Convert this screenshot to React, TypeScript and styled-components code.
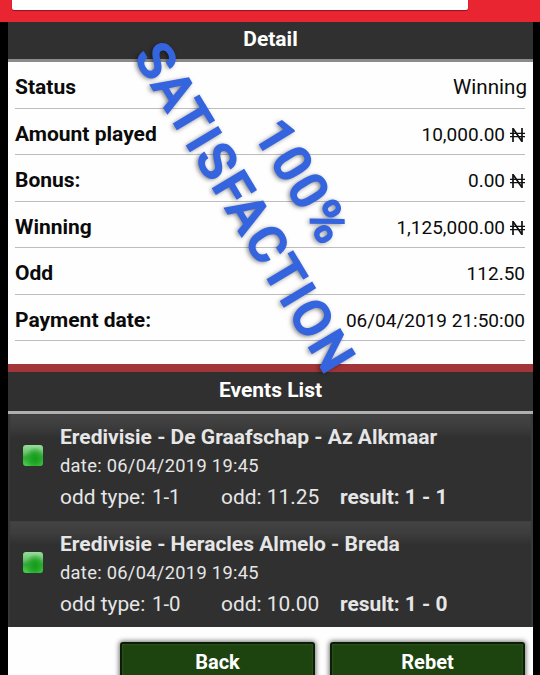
import React from 'react';
import styled, { createGlobalStyle } from 'styled-components';

const GlobalStyle = createGlobalStyle`
  * { box-sizing: border-box; }
  html, body { margin: 0; height: 675px; overflow: hidden; background: #000; }
  body { font-family: Roboto, "Noto Sans", sans-serif; color: #0b0b0b; }
`;

const Screen = styled.main`
  position: relative;
  width: 540px;
  height: 675px;
  overflow: hidden;
  background: #000;
`;

const TopBar = styled.header`
  height: 22px;
  padding-left: 12px;
  background: #e92532;
`;

const AddressField = styled.div`
  width: 456px;
  height: 10px;
  background: #fff;
  border-radius: 0 0 2px 2px;
  box-shadow: 0 1px 1px #8e1420;
`;

const Page = styled.div`
  width: 525px;
  height: 653px;
  margin-left: 8px;
  background: #fefefe;
`;

const SectionTitle = styled.h2<{ $height: number; $line: string }>`
  margin: 0;
  height: ${(p) => p.$height}px;
  padding-bottom: 3px;
  display: flex;
  align-items: center;
  justify-content: center;
  background: #303030;
  border-bottom: 3px solid ${(p) => p.$line};
  color: #fff;
  font-size: 21px;
  font-weight: 700;
  line-height: 24px;
`;

const DetailList = styled.dl`
  margin: 0;
  height: 302px;
  padding: 0 8px 0 7px;
`;

const DetailRow = styled.div`
  height: 46.5px;
  display: flex;
  justify-content: space-between;
  align-items: center;
  border-bottom: 1px solid #bdbdbd;
  line-height: 24px;
  padding-top: 5px;
`;

const Label = styled.dt`
  font-weight: 700;
  font-size: 21px;
`;

const Value = styled.dd<{ $size?: number; $shift?: number; $drop?: number }>`
  margin: 0 ${(p) => p.$shift ?? 0}px 0 0;
  padding-top: ${(p) => p.$drop ?? 2}px;
  font-size: ${(p) => p.$size ?? 19}px;
  white-space: nowrap;
`;

const Naira = styled.svg`
  width: 15px;
  height: 14px;
  margin-left: 5px;
  vertical-align: -1px;
`;

const RedRule = styled.div`
  height: 8px;
  background: #a23537;
`;

const EventRow = styled.article`
  height: 106.5px;
  display: flex;
  padding: 11px 0 0 15px;
  color: #e6e6e6;
  background: linear-gradient(#444 0, #3d3d3d 12px, #303030 24px, #303030 100%);
  box-shadow: inset 2px 0 1px #383838, inset -2px 0 1px #3b3b3b;
`;

const StatusLight = styled.span`
  width: 20px;
  height: 21px;
  margin: 20px 17px 0 0;
  border-radius: 3px;
  background:
    radial-gradient(ellipse at 60% 65%, #129d18 0, #22a528 25%, transparent 60%),
    linear-gradient(#9bdc9d 0, #6cc46f 35%, #35a83a 60%, #4bd04f 100%);
  box-shadow: 0 0 2px #174b19;
`;

const EventBody = styled.div`
  display: flex;
  flex-direction: column;
`;

const EventName = styled.h3`
  margin: 0;
  font-size: 21px;
  line-height: 24px;
  font-weight: 700;
  white-space: nowrap;
`;

const EventDate = styled.div`
  margin-top: 6px;
  font-size: 18.3px;
  line-height: 22px;
  letter-spacing: 0.3px;
`;

const OddsLine = styled.div`
  margin-top: 8px;
  display: grid;
  grid-template-columns: 92px 69px 119px auto;
  font-size: 20.9px;
  line-height: 24px;
  white-space: nowrap;
`;

const OddType = styled.span`
  font-size: 20.4px;
`;

const Result = styled.strong`
  font-weight: 700;
`;

const Actions = styled.footer`
  height: 48px;
  padding: 15px 8px 0 112px;
  display: grid;
  grid-template-columns: 195px 195px;
  column-gap: 15px;
  overflow: hidden;
`;

const ActionButton = styled.button`
  height: 42px;
  padding: 0 0 2px;
  border: 2px solid #0b1d07;
  border-radius: 3px;
  background: #1d430e;
  box-shadow: 0 0 5px 1px rgba(0, 0, 0, 0.55), inset 0 0 2px #4b7040;
  color: #fff;
  font-family: inherit;
  font-size: 20px;
  font-weight: 700;
  line-height: 24px;
`;

const Stamp = styled.div<{ $x: number; $y: number; $angle: number }>`
  position: absolute;
  left: ${(p) => p.$x}px;
  top: ${(p) => p.$y}px;
  transform: translate(-50%, -50%) rotate(${(p) => p.$angle}deg);
  font-size: 51px;
  line-height: 1;
  font-weight: 500;
  letter-spacing: 2.6px;
  white-space: nowrap;
  color: #3564df;
  -webkit-text-stroke: 1.6px #3564df;
  text-shadow: 0 2px 5px rgba(0, 0, 0, 0.6);
  pointer-events: none;
`;

const NairaSign = () => (
  <Naira viewBox="0 0 15 14" fill="none" stroke="#111" aria-label="naira">
    <path d="M3 14V.5L12 13.5V0" strokeWidth="1.7" />
    <path d="M0 5.3h15M0 8.7h15" strokeWidth="1.2" />
  </Naira>
);

const details = [
  { label: 'Status', value: 'Winning', size: 20.6, shift: -2, drop: 0 },
  { label: 'Amount played', value: '10,000.00', naira: true },
  { label: 'Bonus:', value: '0.00', naira: true },
  { label: 'Winning', value: '1,125,000.00', naira: true },
  { label: 'Odd', value: '112.50' },
  { label: 'Payment date:', value: '06/04/2019 21:50:00' },
];

const events = [
  { name: 'Eredivisie - De Graafschap - Az Alkmaar', type: '1-1', odd: '11.25', result: '1 - 1' },
  { name: 'Eredivisie - Heracles Almelo - Breda', type: '1-0', odd: '10.00', result: '1 - 0' },
];

export default function App() {
  return (
    <>
      <GlobalStyle />
      <Screen>
        <TopBar>
          <AddressField />
        </TopBar>
        <Page>
          <SectionTitle $height={40} $line="#8b8b8b">Detail</SectionTitle>
          <DetailList>
            {details.map((d) => (
              <DetailRow key={d.label}>
                <Label>{d.label}</Label>
                <Value $size={d.size} $shift={d.shift} $drop={d.drop}>
                  {d.value}
                  {d.naira && <NairaSign />}
                </Value>
              </DetailRow>
            ))}
          </DetailList>
          <RedRule />
          <SectionTitle $height={42} $line="#b0b0b0">Events List</SectionTitle>
          {events.map((e) => (
            <EventRow key={e.name}>
              <StatusLight />
              <EventBody>
                <EventName>{e.name}</EventName>
                <EventDate>date: 06/04/2019 19:45</EventDate>
                <OddsLine>
                  <span>odd type:</span>
                  <OddType>{e.type}</OddType>
                  <span>odd: {e.odd}</span>
                  <Result>result: {e.result}</Result>
                </OddsLine>
              </EventBody>
            </EventRow>
          ))}
          <Actions>
            <ActionButton>Back</ActionButton>
            <ActionButton>Rebet</ActionButton>
          </Actions>
        </Page>
        <Stamp $x={245.2} $y={208.2} $angle={58.9}>SATISFACTION</Stamp>
        <Stamp $x={302.6} $y={181.8} $angle={58.7}>100%</Stamp>
      </Screen>
    </>
  );
}
